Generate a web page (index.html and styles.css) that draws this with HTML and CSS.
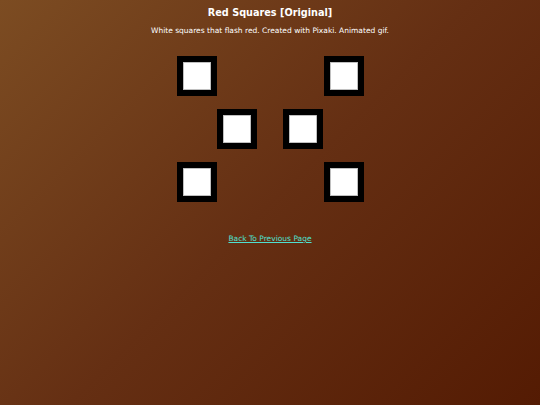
FILE: index.html
```html
<!DOCTYPE html>
<html>
<head>
<meta charset="utf-8">
<link rel="stylesheet" href="styles.css">
</head>
<body>
<div class="page">
  <h1 class="title">Red Squares [Original]</h1>
  <p class="desc">White squares that flash red. Created with Pixaki. Animated gif.</p>
  <div class="art">
    <svg width="188" height="148" viewBox="0 0 188 148" xmlns="http://www.w3.org/2000/svg">
      <g fill="#000">
        <rect x="0" y="0" width="40" height="40"/>
        <rect x="147" y="0" width="40" height="40"/>
        <rect x="40" y="53" width="40" height="40"/>
        <rect x="106" y="53" width="40" height="40"/>
        <rect x="0" y="106" width="40" height="40"/>
        <rect x="147" y="106" width="40" height="40"/>
      </g>
      <g fill="#fff" stroke="#c8c8c8" stroke-width="0.6">
        <rect x="6.3" y="6.3" width="27.4" height="27.4"/>
        <rect x="153.3" y="6.3" width="27.4" height="27.4"/>
        <rect x="46.3" y="59.3" width="27.4" height="27.4"/>
        <rect x="112.3" y="59.3" width="27.4" height="27.4"/>
        <rect x="6.3" y="112.3" width="27.4" height="27.4"/>
        <rect x="153.3" y="112.3" width="27.4" height="27.4"/>
      </g>
    </svg>
  </div>
  <a class="back" href="#">Back To Previous Page</a>
</div>
</body>
</html>
```

FILE: styles.css
```css
html, body {
  margin: 0;
  padding: 0;
}
body {
  min-height: 100vh;
  background: linear-gradient(135deg, #7c4c22 0%, #652f13 50%, #541b03 100%);
  font-family: "DejaVu Sans", Verdana, sans-serif;
  color: #fff;
}
.page {
  display: flex;
  flex-direction: column;
  align-items: center;
  padding-top: 6px;
}
.title {
  font-size: 9.7px;
  font-weight: bold;
  margin: 0;
  line-height: 13px;
}
.desc {
  font-size: 7.5px;
  margin: 7px 0 0 0;
  line-height: 10px;
}
.art {
  margin-top: 20px;
  line-height: 0;
}
.art svg {
  display: block;
  margin-left: 1px;
}
.back {
  margin-top: 30px;
  font-size: 7.5px;
  line-height: 10px;
  color: #4fe0d0;
  text-decoration: underline;
}
```
